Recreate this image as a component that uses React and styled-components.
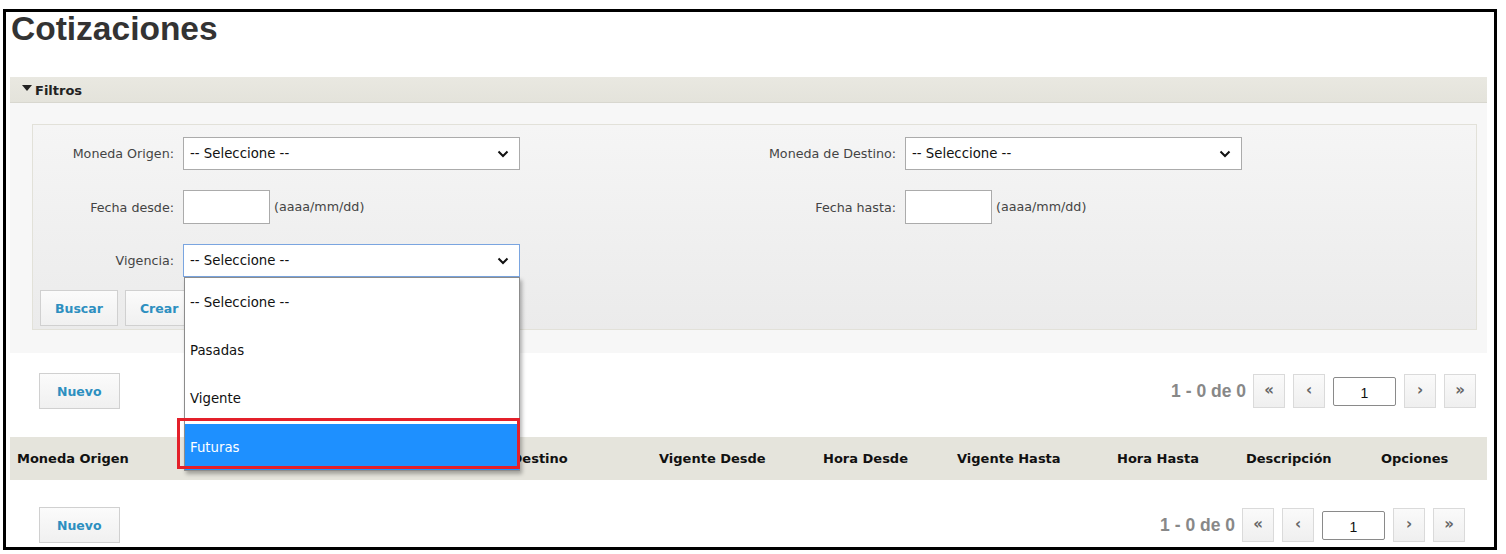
import React from "react";
import styled, { createGlobalStyle } from "styled-components";

const GlobalStyle = createGlobalStyle`
  html, body {
    margin: 0;
    padding: 0;
    background: #fff;
  }
  * { box-sizing: border-box; }
`;

const Frame = styled.div`
  margin: 9px 0 0 3px;
  width: 1494px;
  height: 541px;
  border: 3px solid #000;
  overflow: hidden;
  padding: 0 7px 0 4px;
  font-family: "DejaVu Sans", Verdana, sans-serif;
`;

const Title = styled.h1`
  margin: 0;
  padding: 0 0 0 1px;
  height: 65px;
  font-family: "Liberation Sans", Arial, sans-serif;
  font-size: 33.5px;
  line-height: 34px;
  font-weight: bold;
  color: #333;
`;

const Panel = styled.section`
  background: #f7f7f7;
`;

const PanelHeader = styled.div`
  height: 26px;
  display: flex;
  align-items: center;
  gap: 3px;
  padding: 1px 0 0 12px;
  background: linear-gradient(#e9e8e1, #e4e3db);
  border-bottom: 1px solid #d8d7cf;
  font-size: 13px;
  font-weight: bold;
  color: #222;
`;

const Caret = styled.span`
  width: 0;
  height: 0;
  border-left: 5px solid transparent;
  border-right: 5px solid transparent;
  border-top: 6px solid #222;
  margin-top: -4px;
`;

const PanelBody = styled.div`
  padding: 21px 10px 23px 22px;
`;

const Fieldset = styled.div`
  border: 1px solid #e2e1d9;
  background: linear-gradient(#f5f5f5, #ebebeb);
  padding: 12px 7px 3px 7px;
`;

const FormGrid = styled.div`
  display: grid;
  grid-template-columns: 722px 722px;
  row-gap: 20.5px;
  margin-left: -7px;
`;

const Field = styled.div`
  display: flex;
  align-items: center;
  height: 33px;
`;

const Label = styled.label`
  width: 150px;
  flex: none;
  padding-right: 9px;
  text-align: right;
  font-size: 12.7px;
  color: #444;
`;

const SelectWrap = styled.div`
  position: relative;
  width: 337px;
  height: 33px;
`;

const SelectBox = styled.div`
  width: 100%;
  height: 100%;
  display: flex;
  align-items: center;
  justify-content: space-between;
  padding: 0 10px 0 6px;
  background: #fff;
  border: 1px solid ${(p) => (p.$focused ? "#7aa5e0" : "#ababab")};
  font-size: 13.3px;
  color: #111;
`;

const DateInput = styled.div`
  width: 87px;
  height: 34px;
  background: #fff;
  border: 1px solid #ababab;
`;

const Hint = styled.span`
  margin: -2px 0 0 4px;
  font-size: 12.7px;
  color: #444;
`;

const ButtonRow = styled.div`
  display: flex;
  gap: 7px;
  margin-top: 13px;
`;

const Button = styled.button`
  height: 36px;
  padding: 0 ${(p) => p.$px || 14}px;
  background: linear-gradient(#fbfbfb, #f0f0f0);
  border: 1px solid #d0d0d0;
  font-family: "DejaVu Sans", Verdana, sans-serif;
  font-size: 12.5px;
  font-weight: bold;
  color: #2d8fc0;
`;

const DropList = styled.ul`
  position: absolute;
  top: 100%;
  left: 1px;
  right: 0;
  margin: 0;
  padding: 0;
  list-style: none;
  background: #fff;
  border: 1px solid #8c8c8c;
  box-shadow: 2px 3px 4px rgba(0, 0, 0, 0.3);
  z-index: 5;
`;

const Option = styled.li`
  height: 48px;
  display: flex;
  align-items: center;
  padding-left: 5px;
  font-size: 13.3px;
  color: ${(p) => (p.$active ? "#fff" : "#111")};
  background: ${(p) => (p.$active ? "#1e90ff" : "#fff")};
  border-top: ${(p) => (p.$active ? "2px solid #fff" : "0")};
`;

const Highlight = styled.div`
  position: absolute;
  top: 174px;
  left: -6px;
  width: 343px;
  height: 51px;
  border: 3px solid #e3202a;
  z-index: 6;
  pointer-events: none;
`;

const Toolbar = styled.div`
  display: flex;
  align-items: center;
  justify-content: space-between;
  padding: ${(p) => p.$pad};
`;

const Pager = styled.div`
  display: flex;
  align-items: center;
  gap: 8px;
`;

const PageInfo = styled.span`
  font-family: "Liberation Sans", Arial, sans-serif;
  font-size: 17.5px;
  font-weight: bold;
  color: #888;
  margin-right: -1px;
`;

const PageBtn = styled.div`
  width: 32px;
  height: 34px;
  display: flex;
  align-items: center;
  justify-content: center;
  background: linear-gradient(#fafafa, #efefef);
  border: 1px solid #dadada;
  font-family: "DejaVu Sans", sans-serif;
  font-size: 15px;
  font-weight: bold;
  color: #666;
  padding-bottom: 2px;
`;

const PageInput = styled.div`
  width: 63px;
  height: 29px;
  display: flex;
  align-items: center;
  justify-content: center;
  background: #fff;
  border: 1px solid #8a8a8a;
  border-radius: 2px;
  font-family: "Liberation Sans", Arial, sans-serif;
  font-size: 14px;
  color: #111;
  padding-top: 4px;
`;

const TableHead = styled.div`
  display: grid;
  grid-template-columns: 432px 210px 164px 134px 160px 129px 135px 1fr;
  align-items: center;
  height: 43px;
  padding-left: 7px;
  background: #e5e4dc;
  margin-top: 28px;
`;

const Th = styled.div`
  font-size: 13px;
  font-weight: bold;
  color: #111;
  white-space: nowrap;
`;

const Chevron = () => (
  <svg width="12" height="8" viewBox="0 0 12 8">
    <polyline points="1.5,1.5 6,6 10.5,1.5" fill="none" stroke="#111" strokeWidth="2" />
  </svg>
);

const Pagination = () => (
  <Pager>
    <PageInfo>1 - 0 de 0</PageInfo>
    <PageBtn>«</PageBtn>
    <PageBtn>‹</PageBtn>
    <PageInput>1</PageInput>
    <PageBtn>›</PageBtn>
    <PageBtn>»</PageBtn>
  </Pager>
);

const columns = [
  "Moneda Origen",
  "Moneda Destino",
  "Vigente Desde",
  "Hora Desde",
  "Vigente Hasta",
  "Hora Hasta",
  "Descripción",
  "Opciones",
];

export default function App() {
  const vigencias = ["-- Seleccione --", "Pasadas", "Vigente", "Futuras"];
  return (
    <>
      <GlobalStyle />
      <Frame>
        <Title>Cotizaciones</Title>
        <Panel>
          <PanelHeader>
            <Caret />
            Filtros
          </PanelHeader>
          <PanelBody>
            <Fieldset>
              <FormGrid>
                <Field>
                  <Label>Moneda Origen:</Label>
                  <SelectWrap>
                    <SelectBox>
                      -- Seleccione --
                      <Chevron />
                    </SelectBox>
                  </SelectWrap>
                </Field>
                <Field>
                  <Label>Moneda de Destino:</Label>
                  <SelectWrap>
                    <SelectBox>
                      -- Seleccione --
                      <Chevron />
                    </SelectBox>
                  </SelectWrap>
                </Field>
                <Field>
                  <Label>Fecha desde:</Label>
                  <DateInput />
                  <Hint>(aaaa/mm/dd)</Hint>
                </Field>
                <Field>
                  <Label>Fecha hasta:</Label>
                  <DateInput />
                  <Hint>(aaaa/mm/dd)</Hint>
                </Field>
                <Field>
                  <Label>Vigencia:</Label>
                  <SelectWrap>
                    <SelectBox $focused>
                      -- Seleccione --
                      <Chevron />
                    </SelectBox>
                    <DropList>
                      {vigencias.map((v) => (
                        <Option key={v} $active={v === "Futuras"}>
                          {v}
                        </Option>
                      ))}
                    </DropList>
                    <Highlight />
                  </SelectWrap>
                </Field>
              </FormGrid>
              <ButtonRow>
                <Button>Buscar</Button>
                <Button>Crear</Button>
              </ButtonRow>
            </Fieldset>
          </PanelBody>
        </Panel>
        <Toolbar $pad="20px 11px 0 29px">
          <Button $px={17}>Nuevo</Button>
          <Pagination />
        </Toolbar>
        <TableHead>
          {columns.map((c) => (
            <Th key={c}>{c}</Th>
          ))}
        </TableHead>
        <Toolbar $pad="27px 22px 0 29px">
          <Button $px={17}>Nuevo</Button>
          <Pagination />
        </Toolbar>
      </Frame>
    </>
  );
}
